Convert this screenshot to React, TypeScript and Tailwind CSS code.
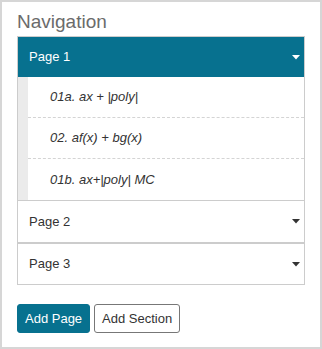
const items = ["01a. ax + |poly|", "02. af(x) + bg(x)", "01b. ax+|poly| MC"];

function Caret({ color }: { color: string }) {
  return (
    <svg width="8" height="5" viewBox="0 0 8 5" className="shrink-0">
      <path d="M0 0 H8 L4 4.5 Z" fill={color} />
    </svg>
  );
}

export default function App() {
  return (
    <div
      className="w-[322px] h-[349px] border-2 border-[#d6d6d6] bg-white px-[15px] pt-[6px]"
      style={{ fontFamily: '"Liberation Sans", Arial, sans-serif' }}
    >
      <h2 className="text-[19px] leading-[28px] text-[#6b6b6b]">Navigation</h2>

      <div className="border border-[#cccccc]">
        {/* Page 1 (open) */}
        <div className="border-b border-[#cccccc]">
          <div className="h-[40px] bg-[#07718f] flex items-center justify-between pl-[11px] pr-[4px]">
            <span className="text-[13px] text-white">Page 1</span>
            <Caret color="#ffffff" />
          </div>
          <div className="flex">
            <div className="w-[10px] bg-[#ebebeb]"></div>
            <div className="flex-1">
              {items.map((t, i) => (
                <div
                  key={t}
                  className={
                    "h-[41px] flex items-center pl-[22px] text-[13px] italic text-[#333333] " +
                    (i < items.length - 1 ? "border-b border-dashed border-[#d4d4d4]" : "")
                  }
                >
                  {t}
                </div>
              ))}
            </div>
          </div>
        </div>

        {/* Page 2 */}
        <div className="h-[43px] border-b-2 border-[#cccccc] flex items-center justify-between pl-[11px] pr-[4px]">
          <span className="text-[13px] text-[#333333]">Page 2</span>
          <Caret color="#333333" />
        </div>

        {/* Page 3 */}
        <div className="h-[40px] flex items-center justify-between pl-[11px] pr-[4px]">
          <span className="text-[13px] text-[#333333]">Page 3</span>
          <Caret color="#333333" />
        </div>
      </div>

      <div className="flex gap-[4px] mt-[19px]">
        <button className="h-[29px] px-[7px] rounded-[3px] border border-[#07718f] bg-[#07718f] text-white text-[13px]">
          Add Page
        </button>
        <button className="h-[29px] px-[7px] rounded-[3px] border border-[#777777] bg-white text-[#333333] text-[13px]">
          Add Section
        </button>
      </div>
    </div>
  );
}
